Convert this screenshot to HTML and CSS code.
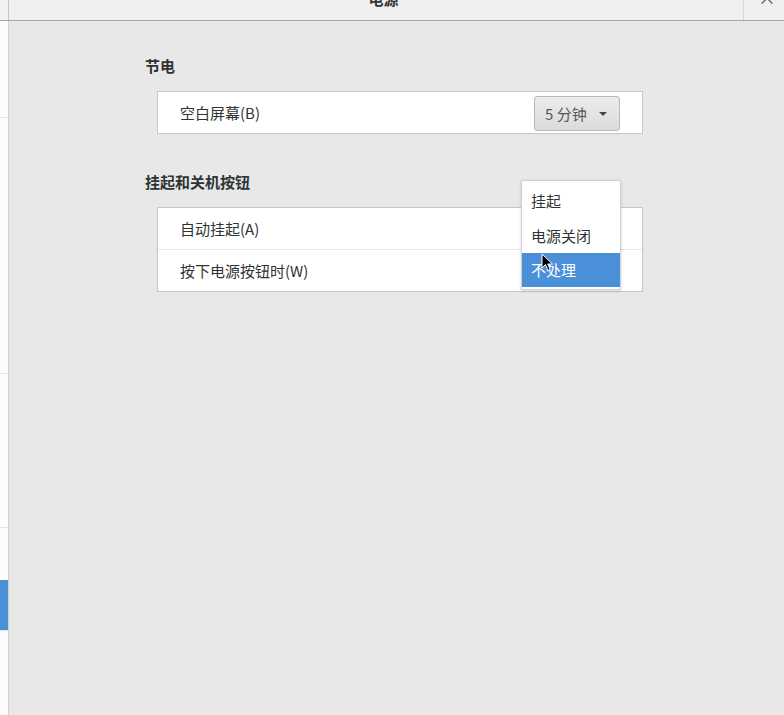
FILE: index.html
```html
<html>
  <head>
    <link rel="stylesheet" href="styles.css">
  </head>
  <body>
    <div class="window">
      <div class="titlebar">
        <div class="titlebar-side"></div>
        <div class="titlebar-main">
          <span class="title">电源</span>
        </div>
        <div class="titlebar-close"><span>×</span></div>
      </div>
      <div class="body">
        <div class="sidebar">
          <div class="sb-row sb-a"></div>
          <div class="sb-row sb-b"></div>
          <div class="sb-row sb-c"></div>
          <div class="sb-row sb-d"></div>
          <div class="sb-row sb-sel"></div>
        </div>
        <div class="content">
          <div class="section-title">节电</div>
          <div class="frame">
            <div class="row">
              <span class="label">空白屏幕(B)</span>
              <div class="combo"><span>5 分钟</span><span class="arrow"></span></div>
            </div>
          </div>
          <div class="section-title second">挂起和关机按钮</div>
          <div class="frame">
            <div class="row"><span class="label">自动挂起(A)</span></div>
            <div class="row"><span class="label">按下电源按钮时(W)</span></div>
          </div>
        </div>
      </div>
      <div class="menu">
        <div class="menu-item">挂起</div>
        <div class="menu-item">电源关闭</div>
        <div class="menu-item selected">不处理</div>
      </div>
      <svg class="cursor" width="14" height="20" viewBox="0 0 14 20">
        <path d="M1 1 L1 15 L4.5 11.5 L7 17.5 L9.2 16.5 L6.8 11 L11.5 11 Z" fill="#000" stroke="#fff" stroke-width="1"/>
      </svg>
    </div>
  </body>
</html>
```

FILE: styles.css
```css
body { margin:0; font-family:"Noto Sans CJK SC","Noto Sans",sans-serif; font-size:15px; color:#2e3436; }
.window { position:relative; width:784px; height:715px; overflow:hidden; background:#e8e8e8; display:flex; flex-direction:column; }

.titlebar { height:20px; display:flex; background:#efefef; border-bottom:1px solid #a4a4a4; overflow:hidden; flex-shrink:0; }
.titlebar-side { width:8px; border-right:1px solid #c4c4c4; background:#f2f2f2; }
.titlebar-main { flex:1; text-align:center; }
.title { display:inline-block; margin-top:-11px; line-height:20px; font-weight:bold; font-size:15px; color:#2e3436; margin-left:15px; }
.titlebar-close { width:40px; border-left:1px solid #d6d6d6; text-align:center; }
.titlebar-close span { display:inline-block; margin-top:-13px; font-size:18px; line-height:20px; color:#555; margin-left:6px; }

.body { flex:1; display:flex; }
.sidebar { width:8px; background:#fcfcfc; border-right:1px solid #cfcfcf; display:flex; flex-direction:column; }
.sb-row { border-bottom:1px solid #e4e4e4; }
.sb-a { height:96px; }
.sb-b { height:255px; }
.sb-c { height:153px; }
.sb-d { height:52px; border-bottom:none; }
.sb-sel { height:50px; background:#4a90d9; }

.content { flex:1; background:#e8e8e8; padding:35px 0 0 136px; }
.section-title { font-weight:bold; font-size:15px; line-height:20px; height:20px; margin-bottom:15px; }
.section-title.second { margin-top:38px; }
.frame { width:484px; margin-left:12px; background:#fff; border:1px solid #c6c6c6; }
.row { height:41px; display:flex; align-items:center; justify-content:space-between; padding:0 22px; border-top:1px solid #e6e6e6; }
.row:first-child { border-top:none; }
.label { line-height:20px; }
.combo { height:33px; margin-top:2px; border:1px solid #b8b8b8; border-radius:3px; background:linear-gradient(#ececec,#dcdcdc); display:flex; align-items:center; justify-content:space-between; padding:0 0 0 10px; width:74px; color:#555; }
.arrow { width:0; height:0; border-left:4px solid transparent; border-right:4px solid transparent; border-top:4px solid #444; margin-right:12px; }

.menu { position:absolute; left:521px; top:180px; width:98px; padding:2px 0 2px; background:#fff; border:1px solid #cfcfcf; box-shadow:0 1px 3px rgba(0,0,0,0.15); }
.menu-item { height:35px; line-height:35px; padding-left:9px; color:#2e3436; }
.menu-item.selected { height:34px; line-height:34px; background:#4a90d9; color:#fff; }
.cursor { position:absolute; left:541px; top:253px; }
```
